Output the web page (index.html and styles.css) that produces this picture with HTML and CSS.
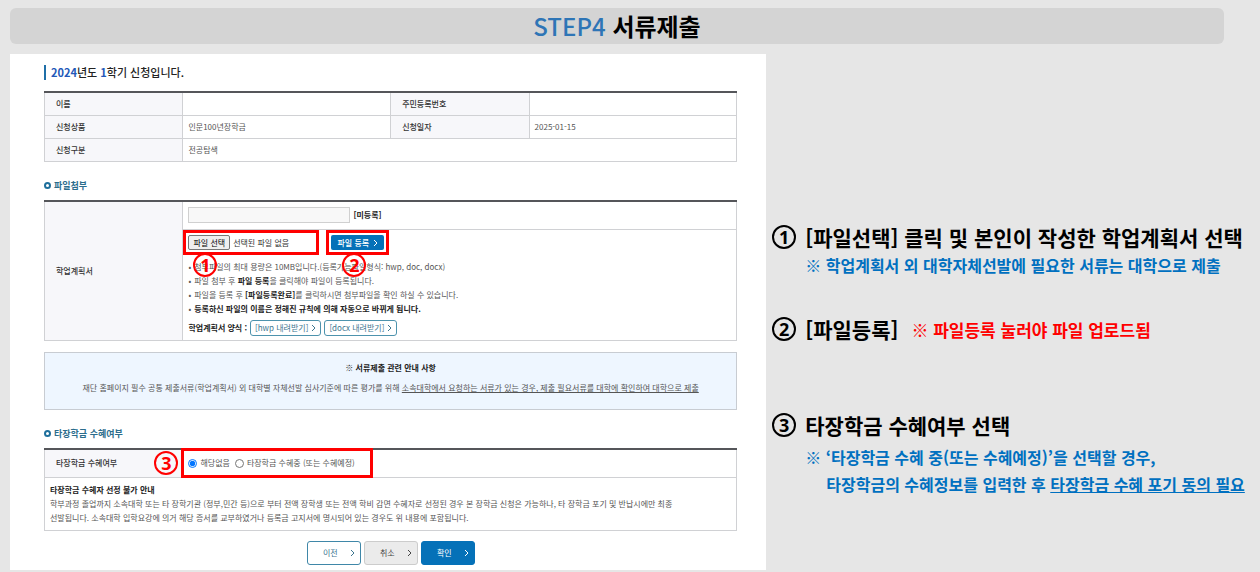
FILE: index.html
```html
<!DOCTYPE html>
<html lang="ko">
<head>
    <meta charset="UTF-8">
    <title>STEP4 서류제출</title>
    <link rel="stylesheet" href="styles.css">
</head>
<body>
    <h1 class="banner"><span class="step">STEP4</span> 서류제출</h1>

    <div class="content">
        <!-- Application form -->
        <form class="panel">
            <h2 class="page-title"><em>2024</em>년도 <em>1</em>학기 신청입니다.</h2>

            <table class="table info">
                <tr>
                    <th>이름</th>
                    <td></td>
                    <th>주민등록번호</th>
                    <td></td>
                </tr>
                <tr>
                    <th>신청상품</th>
                    <td>인문100년장학금</td>
                    <th>신청일자</th>
                    <td>2025-01-15</td>
                </tr>
                <tr>
                    <th>신청구분</th>
                    <td colspan="3">전공탐색</td>
                </tr>
            </table>

            <h3 class="section-title">파일첨부</h3>
            <table class="table upload">
                <tr>
                    <th rowspan="2"><label for="planName">학업계획서</label></th>
                    <td>
                        <div class="line">
                            <input class="file-name" type="text" id="planName" readonly>
                            <strong>[미등록]</strong>
                        </div>
                    </td>
                </tr>
                <tr>
                    <td class="upload-cell">
                        <div class="line actions">
                            <div class="marked file-pick">
                                <button class="choose" type="button" onclick="document.getElementById('planFile').click()">파일 선택</button>
                                <span class="file-state">선택된 파일 없음</span>
                                <input type="file" id="planFile" aria-label="파일 선택" hidden>
                                <span class="circle red under">1</span>
                            </div>
                            <div class="marked">
                                <button class="register" type="button">파일 등록 <svg class="arrow" viewBox="0 0 5 8"><path d="M1 1l3 3-3 3"/></svg></button>
                                <span class="circle red under">2</span>
                            </div>
                        </div>
                        <ul class="guide">
                            <li>첨부파일의 최대 용량은 10MB입니다.(등록가능파일형식: hwp, doc, docx)</li>
                            <li>파일 첨부 후 <strong>파일 등록</strong>을 클릭해야 파일이 등록됩니다.</li>
                            <li>파일을 등록 후 <strong>[파일등록완료]</strong>를 클릭하시면 첨부파일을 확인 하실 수 있습니다.</li>
                            <li><strong>등록하신 파일의 이름은 정해진 규칙에 의해 자동으로 바뀌게 됩니다.</strong></li>
                        </ul>
                        <div class="line">
                            <strong>학업계획서 양식 :</strong>
                            <a class="download" href="#">[hwp 내려받기] <svg class="arrow" viewBox="0 0 5 8"><path d="M1 1l3 3-3 3"/></svg></a>
                            <a class="download" href="#">[docx 내려받기] <svg class="arrow" viewBox="0 0 5 8"><path d="M1 1l3 3-3 3"/></svg></a>
                        </div>
                    </td>
                </tr>
            </table>

            <div class="notice">
                <strong>※ 서류제출 관련 안내 사항</strong>
                <p>재단 홈페이지 필수 공통 제출서류(학업계획서) 외 대학별 자체선발 심사기준에 따른 평가를 위해 <u>소속대학에서 요청하는 서류가 있는 경우, 제출 필요서류를 대학에 확인하여 대학으로 제출</u></p>
            </div>

            <h3 class="section-title">타장학금 수혜여부</h3>
            <table class="table benefit">
                <tr>
                    <th>타장학금 수혜여부</th>
                    <td>
                        <div class="marked choices">
                            <input type="radio" name="benefit" id="benefitNo" checked>
                            <label for="benefitNo">해당없음</label>
                            <input type="radio" name="benefit" id="benefitYes">
                            <label for="benefitYes">타장학금 수혜중 (또는 수혜예정)</label>
                            <span class="circle red before">3</span>
                        </div>
                    </td>
                </tr>
                <tr>
                    <td class="benefit-note" colspan="2">
                        <strong>타장학금 수혜자 선정 불가 안내</strong>
                        <p>학부과정 졸업까지 소속대학 또는 타 장학기관 (정부,민간 등)으로 부터 전액 장학생 또는 전액 학비 감면 수혜자로 선정된 경우 본 장학금 신청은 가능하나, 타 장학금 포기 및 반납시에만 최종<br>선발됩니다. 소속대학 입학요강에 의거 해당 증서를 교부하였거나 등록금 고지서에 명시되어 있는 경우도 위 내용에 포함됩니다.</p>
                    </td>
                </tr>
            </table>

            <div class="buttons">
                <button class="btn prev" type="button">이전 <svg class="arrow" viewBox="0 0 5 8"><path d="M1 1l3 3-3 3"/></svg></button>
                <button class="btn cancel" type="reset">취소 <svg class="arrow" viewBox="0 0 5 8"><path d="M1 1l3 3-3 3"/></svg></button>
                <button class="btn confirm" type="submit">확인 <svg class="arrow" viewBox="0 0 5 8"><path d="M1 1l3 3-3 3"/></svg></button>
            </div>
        </form>

        <!-- Step descriptions -->
        <div class="steps">
            <div class="step-item">
                <span class="circle">1</span>
                <div class="step-text">
                    <h2>[파일선택] 클릭 및 본인이 작성한 학업계획서 선택</h2>
                    <p>※ 학업계획서 외 대학자체선발에 필요한 서류는 대학으로 제출</p>
                </div>
            </div>
            <div class="step-item">
                <span class="circle">2</span>
                <div class="step-text inline">
                    <h2>[파일등록]</h2>
                    <p class="warn">※ 파일등록 눌러야 파일 업로드됨</p>
                </div>
            </div>
            <div class="step-item last">
                <span class="circle">3</span>
                <div class="step-text">
                    <h2>타장학금 수혜여부 선택</h2>
                    <p class="spaced">※ ‘타장학금 수혜 중(또는 수혜예정)’을 선택할 경우,</p>
                    <p class="indent">타장학금의 수혜정보를 입력한 후 <u>타장학금 수혜 포기 동의 필요</u></p>
                </div>
            </div>
        </div>
    </div>
</body>
</html>
```

FILE: styles.css
```css
*,
*::before,
*::after {
    box-sizing: border-box;
}

body {
    margin: 0;
    background-color: #e6e6e6;
    font-family: "Noto Sans CJK KR", sans-serif;
    color: #000;
}

h1, h2, h3, p, ul {
    margin: 0;
    padding: 0;
}

button, input {
    font-family: inherit;
    margin: 0;
}

.banner {
    margin: 8px 36px 10px 10px;
    background-color: #d4d4d4;
    border-radius: 6px;
    font-size: 24px;
    line-height: 36px;
    text-align: center;
}

.step {
    color: #2e75b6;
    font-weight: 500;
}

.content {
    display: flex;
    padding-left: 10px;
}

.panel {
    width: 60.5%;
    flex-shrink: 0;
    background-color: #fff;
    margin-bottom: 2px;
    padding: 11px 29px 5px 34px;
    font-size: 8px;
    line-height: 14px;
    color: #555;
}

.panel strong {
    color: #222;
}

.page-title {
    border-left: 2px solid #1f6fa8;
    padding-left: 5px;
    margin-bottom: 11px;
    font-size: 11px;
    line-height: 15px;
    font-weight: 500;
    color: #222;
}

.page-title em {
    font-style: normal;
    font-weight: 700;
    color: #2358b8;
}

/* Tables */
.table {
    width: 100%;
    table-layout: fixed;
    border-collapse: collapse;
    border-top: 2px solid #55565a;
}

.table th,
.table td {
    height: 23px;
    padding: 0 5px;
    border: 1px solid #d0d1d4;
    text-align: left;
}

.table tr:first-child th,
.table tr:first-child td {
    border-top: 2px solid #55565a;
}

.table th {
    width: 20%;
    padding-left: 11px;
    background-color: #f7f7fa;
    font-weight: 500;
    color: #333;
}

.section-title {
    display: flex;
    align-items: center;
    gap: 3px;
    margin-top: 16px;
    margin-bottom: 7px;
    font-size: 9px;
    line-height: 15px;
    font-weight: 700;
    color: #2c6d8c;
}

.section-title::before {
    content: "";
    width: 7px;
    height: 7px;
    border: 2px solid #1f6f9c;
    border-radius: 50%;
}

/* File upload */
.line {
    display: flex;
    align-items: center;
    gap: 3px;
}

.upload tr:first-child td {
    height: 29px;
}

.file-name {
    width: 162px;
    height: 16px;
    border: 1px solid #d0d0d0;
    background-color: #f8f8f8;
    font-size: 8px;
}

.table .upload-cell {
    padding-top: 5px;
    padding-bottom: 4px;
}

.actions {
    gap: 17px;
    margin-bottom: 10px;
}

/* Red outline drawn around a control */
.marked {
    position: relative;
    display: flex;
    align-items: center;
}

.marked::after {
    content: "";
    position: absolute;
    inset: -5px;
    border: 3px solid #f00;
    pointer-events: none;
}

.file-pick {
    width: 126px;
    gap: 3px;
    color: #333;
}

.choose {
    height: 15px;
    padding: 0 4px;
    border: 1px solid #767676;
    border-radius: 2px;
    background-color: #efefef;
    font-size: 8px;
    line-height: 13px;
    color: #000;
}

.register {
    display: flex;
    align-items: center;
    gap: 4px;
    height: 15px;
    padding: 0 6px;
    border: none;
    border-radius: 2px;
    background-color: #0571b8;
    font-size: 8px;
    line-height: 15px;
    font-weight: 500;
    color: #fff;
}

.arrow {
    width: 5px;
    height: 8px;
    fill: none;
    stroke: currentColor;
}

.guide {
    list-style: none;
    margin-bottom: 4px;
}

.guide li::before {
    content: "•";
    margin-right: 3px;
}

.download {
    display: flex;
    align-items: center;
    gap: 3px;
    height: 16px;
    padding: 0 4px;
    border: 1px solid #4d93ad;
    border-radius: 3px;
    color: #3d7690;
    text-decoration: none;
}

.notice {
    margin-top: 11px;
    padding: 8px 6px 14px;
    border: 1px solid #c8ccd2;
    background-color: #eef6ff;
    text-align: center;
}

.notice p {
    margin-top: 6px;
}

/* Other scholarship */
.benefit tr:first-child td {
    height: 28px;
}

.choices {
    width: 182px;
    height: 20px;
    gap: 3px;
}

.choices::after {
    inset: -5px -3px -5px -7px;
}

.choices input {
    width: 9px;
    height: 9px;
}

.choices label + input {
    margin-left: 2px;
}

.table .benefit-note {
    padding-top: 5px;
    padding-bottom: 5px;
}

.buttons {
    display: flex;
    justify-content: center;
    gap: 3px;
    margin-top: 10px;
}

.btn {
    display: flex;
    align-items: center;
    justify-content: flex-end;
    gap: 12px;
    width: 54px;
    height: 24px;
    padding: 0 5px;
    border: 1px solid;
    border-radius: 3px;
    font-size: 8px;
}

.prev {
    border-color: #3f87a8;
    background-color: #fff;
    color: #3d7690;
}

.cancel {
    border-color: #ccc;
    background-color: #ebebeb;
    color: #444;
}

.confirm {
    border-color: #0571b8;
    background-color: #0571b8;
    color: #fff;
}

/* Numbered circles */
.circle {
    flex-shrink: 0;
    width: 24px;
    height: 24px;
    border: 2px solid #000;
    border-radius: 50%;
    font-family: "Noto Sans", sans-serif;
    font-size: 18px;
    line-height: 20px;
    font-weight: 700;
    text-align: center;
}

.red {
    position: absolute;
    border-color: #f00;
    color: #f00;
}

.under {
    top: 18px;
    left: 5px;
}

.marked + .marked .under {
    left: 11px;
}

.before {
    right: 100%;
    margin-right: 10px;
}

/* Descriptions on the right */
.steps {
    flex: 1;
    padding: 168px 0 0 6px;
    white-space: nowrap;
}

.step-item {
    display: flex;
    gap: 9px;
    margin-bottom: 35px;
}

.step-item .circle {
    margin-top: 3px;
}

.last {
    margin-top: 66px;
    margin-bottom: 0;
}

.step-text h2 {
    font-size: 21px;
    line-height: 30px;
}

.step-text p {
    font-size: 16px;
    line-height: 27px;
    font-weight: 700;
    color: #0070c0;
}

.inline {
    display: flex;
    align-items: center;
    gap: 13px;
}

.step-text .warn {
    font-size: 17px;
    color: #f00;
}

.step-text .spaced {
    margin-top: 4px;
}

.step-text .indent {
    padding-left: 21px;
}
```
